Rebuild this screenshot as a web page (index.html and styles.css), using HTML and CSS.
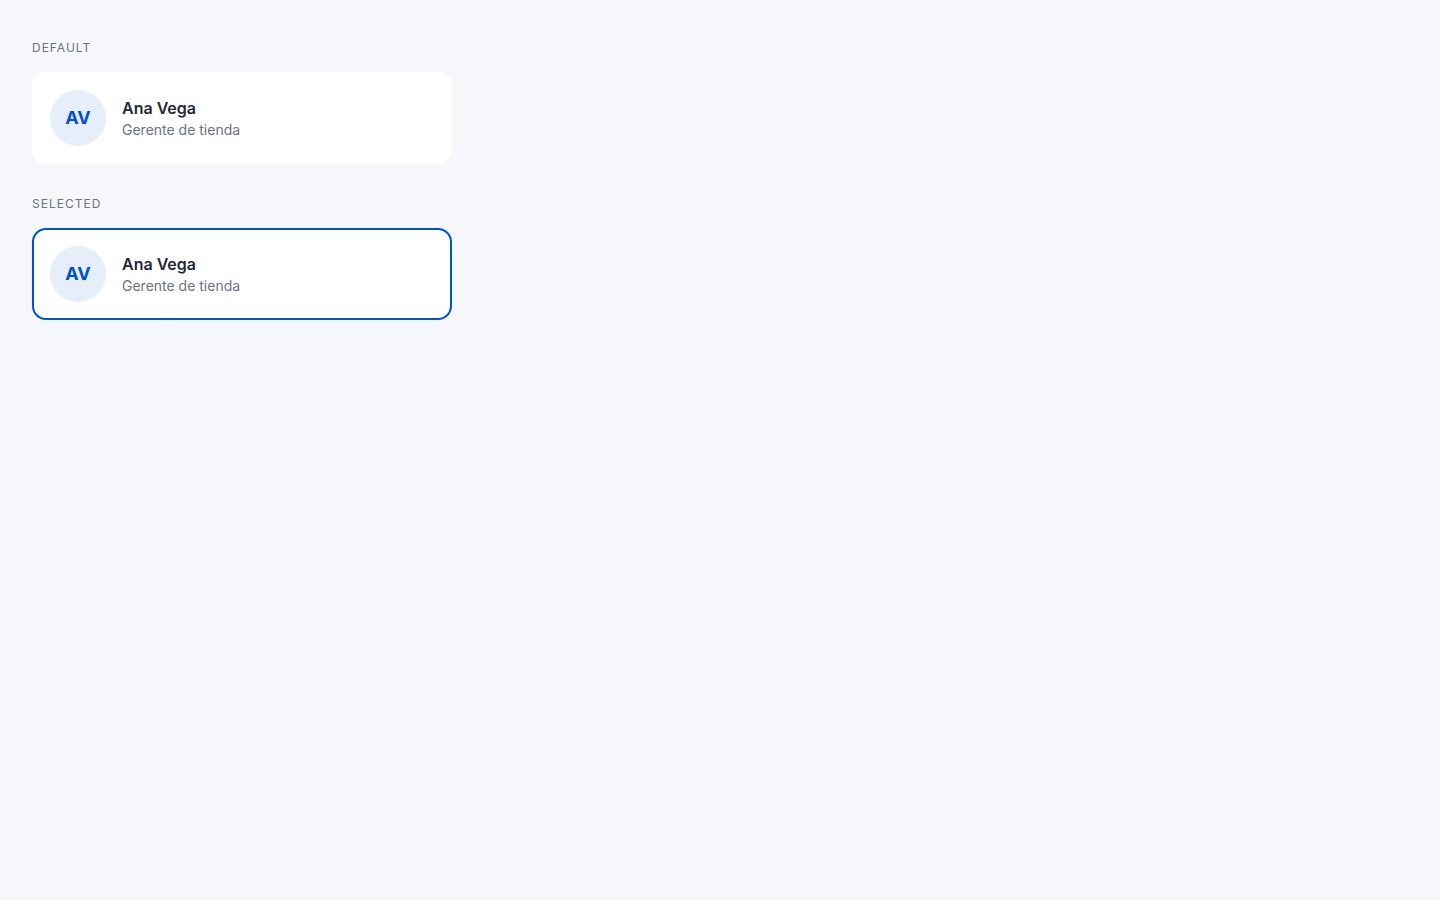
FILE: index.html
```html
<!DOCTYPE html>
<html lang="es">
<head>
<meta charset="utf-8">
<title>Card</title>
<link rel="stylesheet" href="styles.css">
</head>
<body>
<main class="page">
  <section class="section">
    <div class="label">DEFAULT</div>
    <div class="card">
      <div class="avatar">AV</div>
      <div class="info">
        <div class="name">Ana Vega</div>
        <div class="role">Gerente de tienda</div>
      </div>
    </div>
  </section>
  <section class="section">
    <div class="label">SELECTED</div>
    <div class="card selected">
      <div class="avatar">AV</div>
      <div class="info">
        <div class="name">Ana Vega</div>
        <div class="role">Gerente de tienda</div>
      </div>
    </div>
  </section>
</main>
</body>
</html>
```
FILE: styles.css
```css
html, body {
  margin: 0;
  padding: 0;
  background: #f5f7fb;
  font-family: Inter, "Noto Sans", sans-serif;
}
.page {
  padding: 40px 32px;
  display: flex;
  flex-direction: column;
  gap: 32px;
}
.section {
  display: flex;
  flex-direction: column;
  gap: 16px;
}
.label {
  font-size: 12px;
  line-height: 16px;
  letter-spacing: 1px;
  color: #6b7280;
}
.card {
  width: 420px;
  box-sizing: border-box;
  background: #ffffff;
  border: 2px solid transparent;
  border-radius: 14px;
  padding: 16px;
  display: flex;
  align-items: center;
  gap: 16px;
}
.card.selected {
  border-color: #0052cc;
}
.avatar {
  width: 56px;
  height: 55px;
  padding-bottom: 1px;
  border-radius: 50%;
  background: #e6eefa;
  color: #0052cc;
  font-weight: 700;
  font-size: 18px;
  display: flex;
  align-items: center;
  justify-content: center;
  flex-shrink: 0;
}
.info {
  display: flex;
  flex-direction: column;
}
.name {
  font-size: 16px;
  line-height: 24px;
  font-weight: 600;
  color: #1f2937;
}
.role {
  font-size: 14px;
  line-height: 20px;
  color: #6b7280;
}
```
